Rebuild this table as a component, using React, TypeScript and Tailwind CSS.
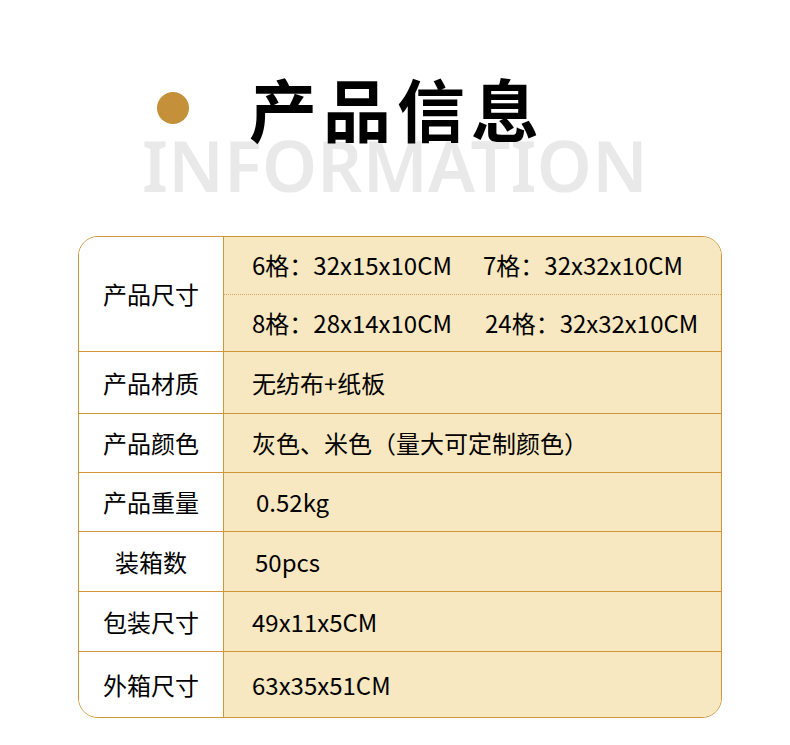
const rows = [
  { label: "产品材质", value: "无纺布+纸板", h: "h-[62px]" },
  { label: "产品颜色", value: "灰色、米色（量大可定制颜色）", h: "h-[59px]" },
  { label: "产品重量", value: "0.52kg", h: "h-[59px]", pad: "pl-[32px]" },
  { label: "装箱数", value: "50pcs", h: "h-[60px]", pad: "pl-[31px]" },
  { label: "包装尺寸", value: "49x11x5CM", h: "h-[60px]" },
  { label: "外箱尺寸", value: "63x35x51CM", h: "h-[65px]" },
];

const font = "font-['Noto_Sans_CJK_SC','Noto_Sans',sans-serif]";

export default function App() {
  return (
    <div className={`w-[790px] h-[745px] bg-white ${font} text-black`}>
      <div className="relative h-[236px]">
        <div className="flex items-center pt-[74px]">
          <div className="ml-[157px] w-[32px] h-[32px] rounded-full bg-[#c4913a]" />
          <h1 className="relative z-10 ml-[60px] text-[68px] leading-[68px] font-bold tracking-[6px]">产品信息</h1>
        </div>
        <div className="mt-[-12px] pl-[142px] text-[70px] leading-[70px] font-semibold tracking-[0.3px] text-[#e9e9e9] font-['Noto_Sans',sans-serif]">
          INFORMATION
        </div>
      </div>

      <div className="mx-[78px] w-[644px] rounded-[20px] border border-[#d1963a] overflow-hidden text-[24px]">
        <div className="grid grid-cols-[145px_1fr] h-[115px] border-b border-[#d1963a]">
          <div className="flex items-center justify-center bg-white border-r border-[#d1963a]">产品尺寸</div>
          <div className="bg-[#f8e8c1] flex flex-col">
            <div className="flex-1 grid grid-cols-[231px_1fr] items-center pl-[28px] border-b border-dotted border-[#d9a75c]">
              <span>6格：32x15x10CM</span>
              <span>7格：32x32x10CM</span>
            </div>
            <div className="flex-1 grid grid-cols-[233px_1fr] items-center pl-[28px]">
              <span>8格：28x14x10CM</span>
              <span>24格：32x32x10CM</span>
            </div>
          </div>
        </div>
        {rows.map((r, i) => (
          <div
            key={r.label}
            className={`grid grid-cols-[145px_1fr] ${r.h} ${i < rows.length - 1 ? "border-b border-[#d1963a]" : ""}`}
          >
            <div className="flex items-center justify-center bg-white border-r border-[#d1963a]">{r.label}</div>
            <div className={`flex items-center bg-[#f8e8c1] ${r.pad ?? "pl-[28px]"}`}>{r.value}</div>
          </div>
        ))}
      </div>
    </div>
  );
}
